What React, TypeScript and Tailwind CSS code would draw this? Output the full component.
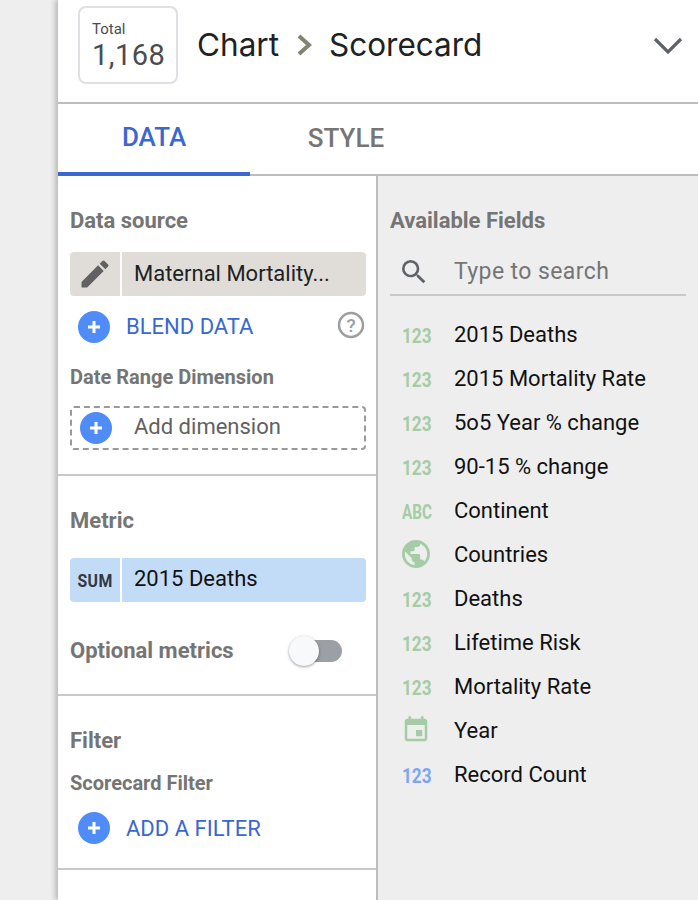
const fields = [
  { name: "2015 Deaths", kind: "num" },
  { name: "2015 Mortality Rate", kind: "num" },
  { name: "5o5 Year % change", kind: "num" },
  { name: "90-15 % change", kind: "num" },
  { name: "Continent", kind: "abc" },
  { name: "Countries", kind: "geo" },
  { name: "Deaths", kind: "num" },
  { name: "Lifetime Risk", kind: "num" },
  { name: "Mortality Rate", kind: "num" },
  { name: "Year", kind: "date" },
  { name: "Record Count", kind: "count" },
];

function PlusCircle() {
  return (
    <svg width="32" height="32" viewBox="0 0 32 32" className="shrink-0">
      <circle cx="16" cy="16" r="16" fill="#4f8cf7" />
      <path d="M16 10v12M10 16h12" stroke="#fff" strokeWidth="3" />
    </svg>
  );
}

function FieldIcon({ kind }: { kind: string }) {
  if (kind === "geo") {
    return (
      <svg width="28" height="28" viewBox="2 2 20 20" fill="#a5cca5">
        <path d="M12 2C6.48 2 2 6.48 2 12s4.48 10 10 10 10-4.48 10-10S17.52 2 12 2zm-1 17.93c-3.95-.49-7-3.85-7-7.93 0-.62.08-1.21.21-1.79L9 15v1c0 1.1.9 2 2 2v1.93zm6.9-2.54c-.26-.81-1-1.39-1.9-1.39h-1v-3c0-.55-.45-1-1-1H8v-2h2c.55 0 1-.45 1-1V7h2c1.1 0 2-.9 2-2v-.41c2.93 1.19 5 4.06 5 7.41 0 2.08-.8 3.97-2.1 5.39z" />
      </svg>
    );
  }
  if (kind === "date") {
    return (
      <svg width="30" height="30" viewBox="0 0 24 24" fill="#a5cca5" className="-ml-[1px]">
        <path d="M17 12h-5v5h5v-5zM16 1v2H8V1H6v2H5c-1.11 0-1.99.9-1.99 2L3 19c0 1.1.89 2 2 2h14c1.1 0 2-.9 2-2V5c0-1.1-.9-2-2-2h-1V1h-2zm3 18H5V8h14v11z" />
      </svg>
    );
  }
  if (kind === "abc") {
    return (
      <span className="mt-[3px] inline-block origin-left scale-x-[0.76] text-[20px] font-bold leading-none text-[#a5cca5]">
        ABC
      </span>
    );
  }
  const color = kind === "count" ? "text-[#7ba6f5]" : "text-[#a5cca5]";
  return (
    <span className={`mt-[3px] inline-block origin-left scale-x-[0.86] text-[20px] font-bold leading-none ${color}`}>
      123
    </span>
  );
}

export default function App() {
  return (
    <div className="flex h-[900px] w-[698px] overflow-hidden bg-[#eeeeee] font-['Roboto',sans-serif]">
      <div className="w-[58px] shrink-0" />
      <div className="flex w-[640px] flex-col bg-white shadow-[-3px_0_5px_rgba(0,0,0,0.22)]">
        {/* header */}
        <div className="flex h-[104px] shrink-0 items-center border-b-2 border-[#bdbdbd] pl-5 pr-[15px]">
          <div className="mb-[13px] h-[78px] w-[100px] shrink-0 rounded-[8px] border-2 border-[#e0e0e4] pl-[12px] pt-[11px] text-[#4a4d50]">
            <div className="text-[15px] leading-[20px]">Total</div>
            <div className="text-[29px] leading-[32px] tracking-[0.5px]">1,168</div>
          </div>
          <div className="mb-[13px] ml-[19px] flex items-center font-['Inter',sans-serif] text-[31.5px] text-[#202124]">
            <span>Chart</span>
            <svg width="18" height="24" viewBox="0 0 18 24" className="ml-[17px] mr-[15px]">
              <path d="M3 3l10 9-10 9" fill="none" stroke="#7f8570" strokeWidth="4" />
            </svg>
            <span>Scorecard</span>
          </div>
          <svg width="30" height="20" viewBox="0 0 30 20" className="mb-[10px] ml-auto">
            <path d="M2 3l13 13L28 3" fill="none" stroke="#5f6368" strokeWidth="3.2" />
          </svg>
        </div>

        {/* tabs */}
        <div className="flex h-[72px] shrink-0 border-b-2 border-[#bdbdbd]">
          <div className="-mb-[2px] flex h-[72px] w-[192px] items-center justify-center border-b-[4px] border-[#3b67d0] pb-[1px] text-[26px] font-medium text-[#3b67d0]">
            DATA
          </div>
          <div className="flex w-[192px] items-center justify-center pb-[2px] text-[26px] font-medium text-[#757575]">
            STYLE
          </div>
        </div>

        <div className="flex min-h-0 flex-1">
          {/* left column */}
          <div className="w-[320px] shrink-0 border-r-2 border-[#bdbdbd]">
            <section className="h-[300px] border-b-2 border-[#c8c8c8] pl-3 pr-[10px] pt-[32px]">
              <h3 className="text-[22px] font-bold leading-[26px] text-[#757575]">Data source</h3>
              <div className="mt-[18px] flex h-11 overflow-hidden rounded-[4px] bg-[#e0ddd8]">
                <div className="flex w-[52px] items-center justify-center border-r-2 border-white">
                  <svg width="36" height="36" viewBox="0 0 24 24" fill="#616161">
                    <path d="M3 17.25V21h3.75L17.81 9.94l-3.75-3.75L3 17.25zM20.71 7.04a1 1 0 0 0 0-1.41l-2.34-2.34a1 1 0 0 0-1.41 0l-1.83 1.83 3.75 3.75 1.83-1.83z" />
                  </svg>
                </div>
                <div className="flex flex-1 items-center pb-[2px] pl-3 text-[22px] text-[#202124]">Maternal Mortality...</div>
              </div>
              <div className="mt-[14px] flex items-center pl-2">
                <PlusCircle />
                <span className="ml-[16px] text-[22px] text-[#3b67d0]">BLEND DATA</span>
                <svg width="30" height="30" viewBox="0 0 30 30" className="mb-[3px] ml-auto">
                  <circle cx="15" cy="15" r="12" fill="none" stroke="#9e9e9e" strokeWidth="2.5" />
                  <text x="15" y="21.5" textAnchor="middle" fontSize="19" fontWeight="500" fill="#9e9e9e" fontFamily="Roboto, sans-serif">?</text>
                </svg>
              </div>
              <h4 className="mt-[22px] text-[20px] font-bold leading-[24px] text-[#757575]">Date Range Dimension</h4>
              <div className="mt-[17px] flex h-[44px] items-center rounded-[4px] border-2 border-dashed border-[#9a9a9a] pl-2">
                <PlusCircle />
                <span className="ml-[22px] pb-[3px] text-[22px] text-[#616161]">Add dimension</span>
              </div>
            </section>

            <section className="h-[220px] border-b-2 border-[#c8c8c8] pl-3 pr-[10px] pt-[32px]">
              <h3 className="text-[22px] font-bold leading-[26px] text-[#757575]">Metric</h3>
              <div className="mt-[24px] flex h-11 overflow-hidden rounded-[4px] bg-[#c2dcf7]">
                <div className="flex w-[52px] items-center justify-center border-r-2 border-white">
                  <span className="inline-block scale-x-[0.88] text-[18px] font-bold tracking-[0.5px] text-[#33393f]">SUM</span>
                </div>
                <div className="flex flex-1 items-center pb-[3px] pl-3 text-[22px] text-[#111]">2015 Deaths</div>
              </div>
              <div className="mt-[35px] flex items-center">
                <span className="text-[22px] font-bold leading-[28px] text-[#757575]">Optional metrics</span>
                <div className="relative ml-auto mr-[24px] h-[22px] w-[50px] rounded-full bg-[#9aa0a3]">
                  <div className="absolute -left-[3px] -top-[4px] h-[30px] w-[30px] rounded-full bg-[#f8f9fa] shadow-[0_1px_3px_rgba(0,0,0,0.4)]" />
                </div>
              </div>
            </section>

            <section className="h-[174px] border-b-2 border-[#c8c8c8] pl-3 pr-[10px] pt-[32px]">
              <h3 className="text-[22px] font-bold leading-[26px] text-[#757575]">Filter</h3>
              <h4 className="mt-[17px] text-[20px] font-bold leading-[24px] text-[#757575]">Scorecard Filter</h4>
              <div className="mt-[15px] flex items-center pl-2">
                <PlusCircle />
                <span className="ml-[16px] pt-[2px] text-[22px] text-[#3b67d0]">ADD A FILTER</span>
              </div>
            </section>
          </div>

          {/* available fields */}
          <div className="flex-1 bg-[#eeeeee] pl-3 pr-3 pt-[32px]">
            <h3 className="text-[22px] font-bold leading-[26px] text-[#757575]">Available Fields</h3>
            <div className="mt-[16px] flex h-[46px] items-center border-b-2 border-[#c8c8c8] pl-[8px]">
              <svg width="32" height="32" viewBox="0 0 24 24" fill="#5f6368" className="shrink-0">
                <path d="M15.5 14h-.79l-.28-.27A6.47 6.47 0 0 0 16 9.5 6.5 6.5 0 1 0 9.5 16c1.61 0 3.09-.59 4.23-1.57l.27.28v.79l5 4.99L20.49 19l-4.99-5zm-6 0C7.01 14 5 11.99 5 9.5S7.01 5 9.5 5 14 7.01 14 9.5 11.99 14 9.5 14z" />
              </svg>
              <span className="ml-[24px] text-[23px] tracking-[0.4px] text-[#757575]">Type to search</span>
            </div>
            <ul className="mt-4">
              {fields.map((f) => (
                <li key={f.name} className="flex h-11 items-center">
                  <span className="flex w-[64px] shrink-0 items-center pl-[12px]">
                    <FieldIcon kind={f.kind} />
                  </span>
                  <span className="text-[22px] text-[#111]">{f.name}</span>
                </li>
              ))}
            </ul>
          </div>
        </div>
      </div>
    </div>
  );
}
